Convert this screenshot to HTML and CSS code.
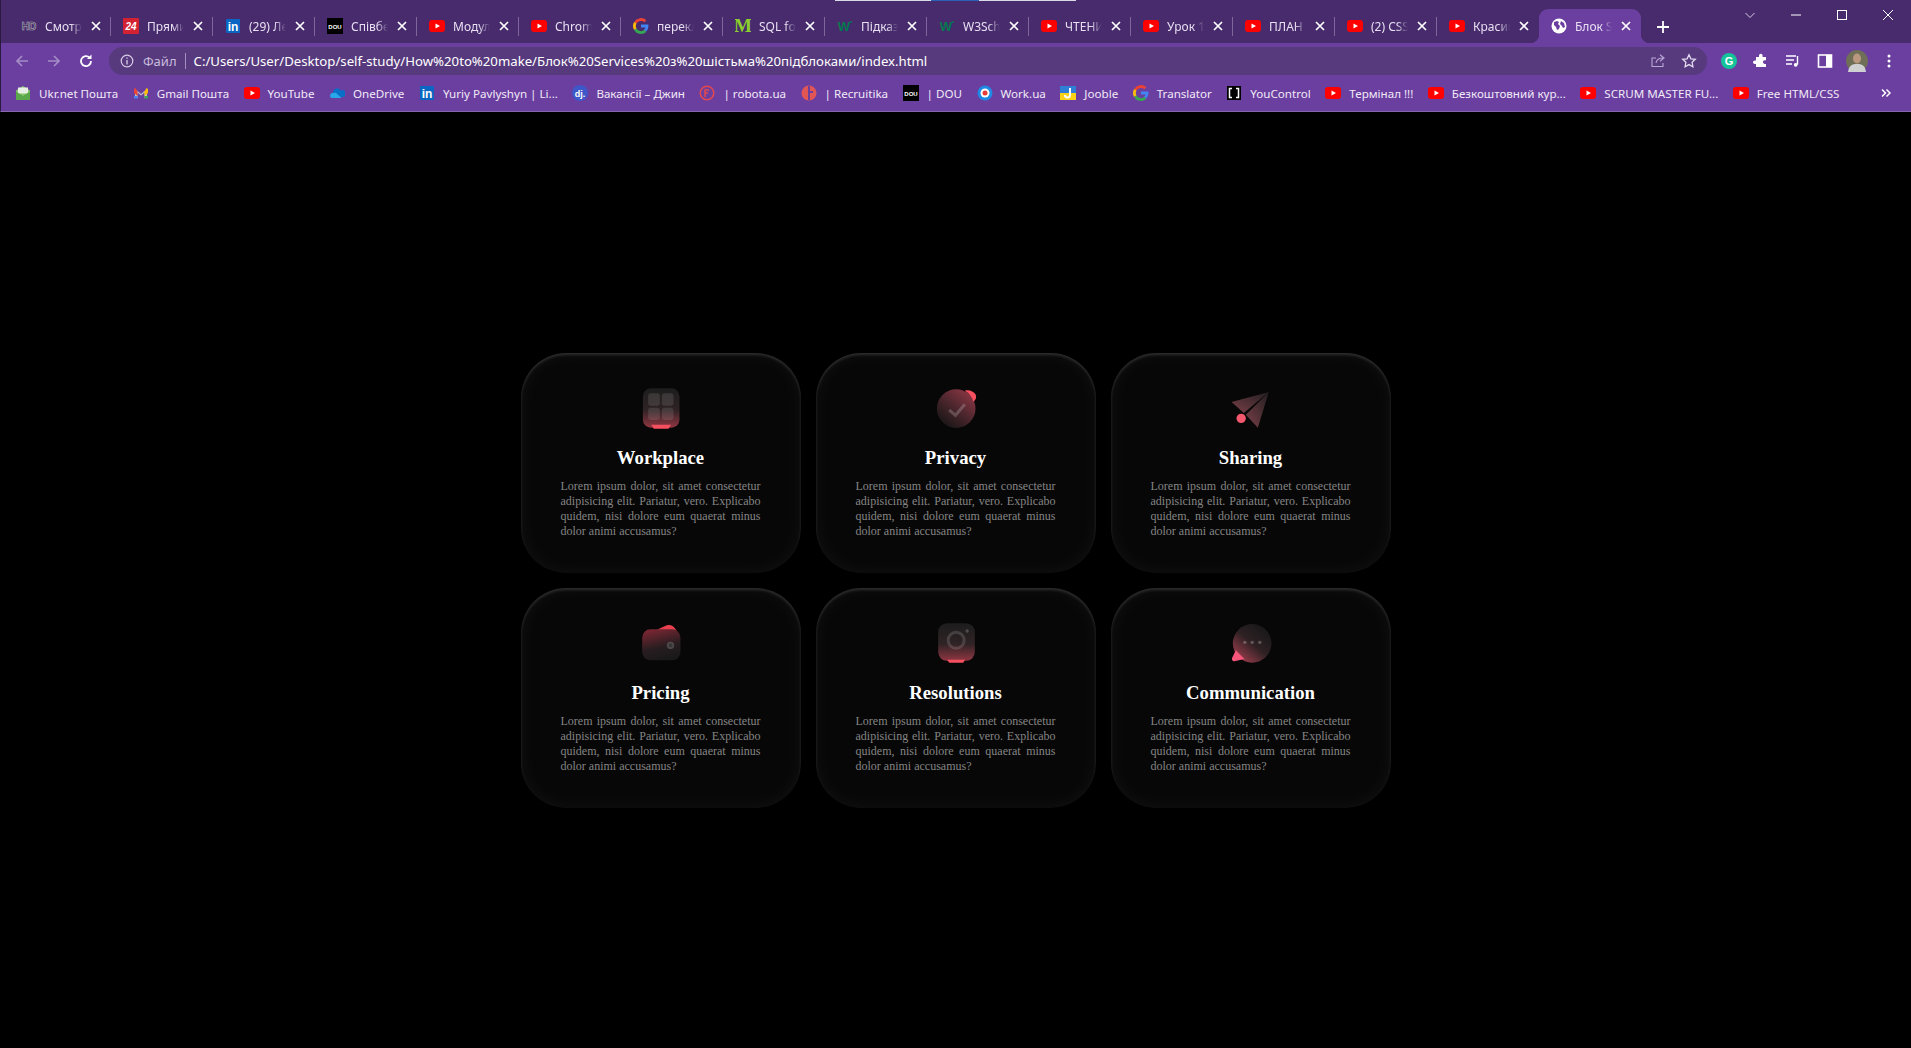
FILE: index.html
```html
<!DOCTYPE html>
<html lang="uk">
<head>
  <meta charset="UTF-8" />
  <meta name="viewport" content="width=device-width, initial-scale=1" />
  <title>Блок Services</title>
  <link rel="stylesheet" href="styles.css">
</head>
<body>
  <!-- favicons and small toolbar icons -->
  <svg class="sprites" aria-hidden="true">
    <defs>
      <linearGradient id="g-tile" x1="0" y1="0" x2="0" y2="1">
        <stop offset="0" stop-color="#1d1d1d"/><stop offset=".55" stop-color="#2f2325"/><stop offset="1" stop-color="#8f3642"/>
      </linearGradient>
      <linearGradient id="g-round" x1=".85" y1=".05" x2=".15" y2=".95">
        <stop offset="0" stop-color="#8c3745"/><stop offset=".55" stop-color="#45242a"/><stop offset="1" stop-color="#161515"/>
      </linearGradient>
      <linearGradient id="g-wallet" x1=".2" y1="0" x2=".5" y2="1">
        <stop offset="0" stop-color="#7c2733"/><stop offset=".6" stop-color="#281d20"/><stop offset="1" stop-color="#1a191a"/>
      </linearGradient>
      <linearGradient id="g-bubble" x1=".1" y1=".95" x2=".8" y2=".1">
        <stop offset="0" stop-color="#a5404f"/><stop offset=".55" stop-color="#2e2124"/><stop offset="1" stop-color="#191819"/>
      </linearGradient>
      <linearGradient id="g-plane" x1="1" y1="0" x2="0" y2="1">
        <stop offset="0" stop-color="#211e1f"/><stop offset="1" stop-color="#7a4049"/>
      </linearGradient>
    </defs>
    <symbol id="i-yt" viewBox="0 0 16 16"><rect y="2" width="16" height="12" rx="3" fill="#f00"/><path d="M6.5 5.5 11 8l-4.500 2.500z" fill="#fff"/></symbol>
    <symbol id="i-g" viewBox="0 0 16 16">
      <path d="M2.300 4.800A6.500 6.500 0 0 1 12.400 3.300" fill="none" stroke="#ea4335" stroke-width="2.800"/>
      <path d="M2.300 4.800a6.500 6.500 0 0 0 0 6.400" fill="none" stroke="#fbbc05" stroke-width="2.800"/>
      <path d="M2.300 11.200a6.500 6.500 0 0 0 10 1.700" fill="none" stroke="#34a853" stroke-width="2.800"/>
      <path d="M8 6.600h7.400c.3 3-.6 5.300-2.200 6.800l-2.200-1.800c.8-.6 1.300-1.300 1.500-2.200H8z" fill="#4285f4"/>
    </symbol>
    <symbol id="i-x" viewBox="0 0 10 10"><path d="M1 1l8 8M9 1l-8 8" stroke="#fff" stroke-width="1.700" fill="none"/></symbol>
  </svg>

  <header class="chrome">
    <div class="top-line"><span class="blue"></span></div>
    <div class="tabstrip">
      <div class="tab"><svg class="fav" viewBox="0 0 16 16"><text x="8" y="12" text-anchor="middle" class="ico-text" font-size="10" fill="#2b2140" stroke="#b9b0c6" stroke-width=".6">HD</text></svg><span class="tab-title">Смотреть</span><svg class="tab-x"><use href="#i-x"/></svg></div>
      <div class="tab"><svg class="fav" viewBox="0 0 16 16"><rect width="16" height="16" rx="1" fill="#d32232"/><text x="8" y="12" text-anchor="middle" class="ico-text" font-size="10" font-style="italic" fill="#fff">24</text></svg><span class="tab-title">Прямий</span><svg class="tab-x"><use href="#i-x"/></svg></div>
      <div class="tab"><svg class="fav" viewBox="0 0 16 16"><rect x="1" y="1" width="14" height="14" rx="1" fill="#0a66c2"/><text x="8" y="13" text-anchor="middle" class="ico-text" font-size="12" fill="#fff">in</text></svg><span class="tab-title">(29) Лента</span><svg class="tab-x"><use href="#i-x"/></svg></div>
      <div class="tab"><svg class="fav" viewBox="0 0 16 16"><rect width="16" height="16" fill="#000"/><text x="8" y="10.500" text-anchor="middle" class="ico-text" font-size="6" fill="#fff">DOU</text></svg><span class="tab-title">Співбесіда</span><svg class="tab-x"><use href="#i-x"/></svg></div>
      <div class="tab"><svg class="fav"><use href="#i-yt"/></svg><span class="tab-title">Модуль</span><svg class="tab-x"><use href="#i-x"/></svg></div>
      <div class="tab"><svg class="fav"><use href="#i-yt"/></svg><span class="tab-title">Chrome</span><svg class="tab-x"><use href="#i-x"/></svg></div>
      <div class="tab"><svg class="fav"><use href="#i-g"/></svg><span class="tab-title">переклад</span><svg class="tab-x"><use href="#i-x"/></svg></div>
      <div class="tab"><svg class="fav" viewBox="0 0 16 16"><text x="8" y="14" text-anchor="middle" class="ico-serif" font-size="19" fill="#8ccf2c">M</text></svg><span class="tab-title">SQL for</span><svg class="tab-x"><use href="#i-x"/></svg></div>
      <div class="tab"><svg class="fav" viewBox="0 0 16 16"><text x="7" y="13" text-anchor="middle" class="ico-text" font-size="13" fill="#04794f">W</text><circle cx="14" cy="4" r="1" fill="#04794f"/></svg><span class="tab-title">Підказки</span><svg class="tab-x"><use href="#i-x"/></svg></div>
      <div class="tab"><svg class="fav" viewBox="0 0 16 16"><text x="7" y="13" text-anchor="middle" class="ico-text" font-size="13" fill="#04794f">W</text><circle cx="14" cy="4" r="1" fill="#04794f"/></svg><span class="tab-title">W3Schools</span><svg class="tab-x"><use href="#i-x"/></svg></div>
      <div class="tab"><svg class="fav"><use href="#i-yt"/></svg><span class="tab-title">ЧТЕНИЕ</span><svg class="tab-x"><use href="#i-x"/></svg></div>
      <div class="tab"><svg class="fav"><use href="#i-yt"/></svg><span class="tab-title">Урок 1:</span><svg class="tab-x"><use href="#i-x"/></svg></div>
      <div class="tab"><svg class="fav"><use href="#i-yt"/></svg><span class="tab-title">ПЛАН Б</span><svg class="tab-x"><use href="#i-x"/></svg></div>
      <div class="tab"><svg class="fav"><use href="#i-yt"/></svg><span class="tab-title">(2) CSS</span><svg class="tab-x"><use href="#i-x"/></svg></div>
      <div class="tab"><svg class="fav"><use href="#i-yt"/></svg><span class="tab-title">Красивый</span><svg class="tab-x"><use href="#i-x"/></svg></div>
      <div class="tab active"><svg class="fav" viewBox="0 0 16 16"><circle cx="8" cy="8" r="7.500" fill="#fff"/><path d="M3 4l3-1 2 1-1 2 2 2-1 3-2 1-1-3-2-2zM10 3l3 2 1 4-2 1-1-2-2-2z" fill="#6b3fa0"/></svg><span class="tab-title">Блок Services</span><svg class="tab-x"><use href="#i-x"/></svg></div>
      <button class="new-tab" type="button"><svg viewBox="0 0 14 14"><path d="M7 1v12M1 7h12" stroke="#fff" stroke-width="1.800"/></svg></button>
      <div class="win-controls">
        <span class="win-btn"><svg viewBox="0 0 12 12"><path d="M1.500 4 6 8.500 10.500 4" fill="none" stroke="#d8cde6" stroke-width="1"/></svg></span>
        <span class="win-btn"><svg viewBox="0 0 12 12"><path d="M1 6h10" stroke="#fff" stroke-width="1"/></svg></span>
        <span class="win-btn"><svg viewBox="0 0 12 12"><rect x="1.500" y="1.500" width="9" height="9" fill="none" stroke="#fff" stroke-width="1"/></svg></span>
        <span class="win-btn"><svg viewBox="0 0 12 12"><path d="M1 1l10 10M11 1 1 11" stroke="#fff" stroke-width="1"/></svg></span>
      </div>
    </div>

    <div class="toolbar">
      <span class="tb-btn"><svg viewBox="0 0 16 16"><path d="M14 8H3M8 3 3 8l5 5" fill="none" stroke="#a58cc6" stroke-width="1.700"/></svg></span>
      <span class="tb-btn"><svg viewBox="0 0 16 16"><path d="M2 8h11M8 3l5 5-5 5" fill="none" stroke="#a58cc6" stroke-width="1.700"/></svg></span>
      <span class="tb-btn"><svg viewBox="0 0 16 16"><path d="M13 8a5 5 0 1 1-1.500-3.500" fill="none" stroke="#fff" stroke-width="1.800"/><path d="M13.500 1.500v4.500H9z" fill="#fff"/></svg></span>
      <div class="omnibox">
        <svg class="omni-info" viewBox="0 0 14 14"><circle cx="7" cy="7" r="5.800" fill="none" stroke="#d8cde6" stroke-width="1.200"/><path d="M7 6v4.500M7 3.500v1.300" stroke="#d8cde6" stroke-width="1.300"/></svg>
        <span class="omni-scheme">Файл</span>
        <span class="omni-sep"></span>
        <span class="omni-url">C:/Users/User/Desktop/self-study/How%20to%20make/Блок%20Services%20з%20шістьма%20підблоками/index.html</span>
        <svg class="omni-ico" viewBox="0 0 16 16"><path d="M13 10v3.500H2V5h4M6 10c.5-3 2.500-5 7-5M10 1.800 14 5l-4 3.200" fill="none" stroke="#b9a7d3" stroke-width="1.100"/></svg>
        <svg class="omni-ico" viewBox="0 0 16 16"><path d="m8 1.800 1.900 4 4.400.5-3.200 3 .8 4.400L8 11.600l-3.900 2.100.8-4.400-3.200-3 4.400-.5z" fill="none" stroke="#e4dbef" stroke-width="1.300"/></svg>
      </div>
      <span class="tb-btn"><svg viewBox="0 0 16 16"><circle cx="8" cy="8" r="8" fill="#15c39a"/><text x="8" y="12" text-anchor="middle" class="ico-text" font-size="11" fill="#fff">G</text></svg></span>
      <span class="tb-btn"><svg viewBox="0 0 16 16"><path d="M6 2.500a1.800 1.800 0 0 1 3.600 0V4H13v3.300h-1.300a1.800 1.800 0 0 0 0 3.600H13V14H3v-3H1.800a1.800 1.800 0 0 1 0-3.600H3V4h3z" fill="#fff"/></svg></span>
      <span class="tb-btn"><svg viewBox="0 0 16 16"><path d="M1 3h10M1 7h8M1 11h6" stroke="#fff" stroke-width="1.300"/><path d="M12.500 3v8.500" stroke="#fff" stroke-width="1.400"/><circle cx="10.700" cy="11.800" r="1.900" fill="#fff"/></svg></span>
      <span class="tb-btn"><svg viewBox="0 0 16 16"><rect x="1.500" y="2" width="13" height="12" fill="none" stroke="#fff" stroke-width="1.600"/><rect x="9" y="2" width="5.500" height="12" fill="#fff"/></svg></span>
      <span class="tb-btn"><svg class="avatar" viewBox="0 0 22 22"><circle cx="11" cy="11" r="11" fill="#6f6f58"/><ellipse cx="11" cy="8.500" rx="4" ry="5" fill="#b9987f"/><path d="M2 22c1-7 4-8 9-8s8 1 9 8z" fill="#cfd0d2"/></svg></span>
      <span class="tb-btn"><svg viewBox="0 0 16 16"><circle cx="8" cy="3" r="1.500" fill="#fff"/><circle cx="8" cy="8" r="1.500" fill="#fff"/><circle cx="8" cy="13" r="1.500" fill="#fff"/></svg></span>
    </div>

    <nav class="bookmarks">
      <a class="bm"><svg class="bm-ico" viewBox="0 0 16 16"><path d="M1 5.500 8 1l7 4.500V15H1z" fill="#84c66a"/><path d="M3 2.500h10v6H3z" fill="#e8efe4"/><path d="M1 6.500 8 11l7-4.500V15H1z" fill="#5aa84a"/></svg>Ukr.net Пошта</a>
      <a class="bm"><svg class="bm-ico" viewBox="0 0 16 16"><path d="M2 13V4l6 5 6-5v9h-2.500V7.500L8 10.500 4.500 7.500V13z" fill="#c5c5c5"/><path d="M1 4v4l3.500 3V6.500L2.500 3z" fill="#ea4335"/><path d="M15 4v4l-3.500 3V6.500l2-3.500z" fill="#fbbc05"/><path d="M1 11v2.500h3.500V11z" fill="#4285f4"/><path d="M11.500 11v2.500H15V11z" fill="#34a853"/></svg>Gmail Пошта</a>
      <a class="bm"><svg class="bm-ico"><use href="#i-yt"/></svg>YouTube</a>
      <a class="bm"><svg class="bm-ico" viewBox="0 0 16 16"><path d="M4 7a4 4 0 0 1 7.500-1.500A3.500 3.500 0 0 1 15 12H6z" fill="#0a6fc8"/><path d="M1 11a3 3 0 0 1 4-3l1.500-.5 6 5.500H3a2 2 0 0 1-2-2z" fill="#28a8ea"/></svg>OneDrive</a>
      <a class="bm"><svg class="bm-ico" viewBox="0 0 16 16"><rect x="1" y="1" width="14" height="14" rx="1" fill="#0a66c2"/><text x="8" y="13" text-anchor="middle" class="ico-text" font-size="12" fill="#fff">in</text></svg>Yuriy Pavlyshyn | Li...</a>
      <a class="bm"><svg class="bm-ico" viewBox="0 0 16 16"><circle cx="8" cy="8" r="8" fill="#3e57c9"/><text x="8" y="11.500" text-anchor="middle" class="ico-text" font-size="9" fill="#fff">dj.</text></svg>Вакансії – Джин</a>
      <a class="bm"><svg class="bm-ico" viewBox="0 0 16 16"><circle cx="8" cy="8" r="6.800" fill="none" stroke="#e5484d" stroke-width="1.500"/><path d="M6 12V5h4M6 8h3" fill="none" stroke="#e5484d" stroke-width="1.500"/></svg>| robota.ua</a>
      <a class="bm"><svg class="bm-ico" viewBox="0 0 16 16"><circle cx="8" cy="8" r="7.500" fill="#e25555"/><path d="M7 1h2v5h3v2H9v7H7z" fill="#6b3fa0"/></svg>| Recruitika</a>
      <a class="bm"><svg class="bm-ico" viewBox="0 0 16 16"><rect width="16" height="16" fill="#000"/><text x="8" y="10.500" text-anchor="middle" class="ico-text" font-size="6" fill="#fff">DOU</text></svg>| DOU</a>
      <a class="bm"><svg class="bm-ico" viewBox="0 0 16 16"><circle cx="8" cy="8" r="7.500" fill="#1e88e5"/><circle cx="8" cy="8" r="4.500" fill="#fff"/><circle cx="8" cy="8" r="2.500" fill="#e53935"/></svg>Work.ua</a>
      <a class="bm"><svg class="bm-ico" viewBox="0 0 16 16"><rect y="1" width="16" height="7" fill="#2f7fd6"/><rect y="8" width="16" height="7" fill="#fcd116"/><path d="M10 3v7a2.500 2.500 0 0 1-5 0" fill="none" stroke="#fff" stroke-width="2"/></svg>Jooble</a>
      <a class="bm"><svg class="bm-ico"><use href="#i-g"/></svg>Translator</a>
      <a class="bm"><svg class="bm-ico" viewBox="0 0 16 16"><rect x="1" y="1" width="14" height="14" fill="#000"/><path d="M6 3.500H3.500v9H6M10 3.500h2.500v9H10" fill="none" stroke="#fff" stroke-width="1.500"/></svg>YouControl</a>
      <a class="bm"><svg class="bm-ico"><use href="#i-yt"/></svg>Термінал !!!</a>
      <a class="bm"><svg class="bm-ico"><use href="#i-yt"/></svg>Безкоштовний кур...</a>
      <a class="bm"><svg class="bm-ico"><use href="#i-yt"/></svg>SCRUM MASTER FU...</a>
      <a class="bm"><svg class="bm-ico"><use href="#i-yt"/></svg>Free HTML/CSS</a>
      <svg class="bm-more" viewBox="0 0 10 10"><path d="M1 1.500 4.500 5 1 8.500M5.500 1.500 9 5 5.500 8.500" fill="none" stroke="#fff" stroke-width="1.500"/></svg>
    </nav>
  </header>

  <main class="stage">
    <section class="services">
      <article class="card">
        <svg class="card-icon" viewBox="61.500 21 180 150">
          <rect x="97" y="37" width="110" height="118" rx="24" fill="url(#g-tile)"/>
          <g fill="#fff" fill-opacity=".11">
            <rect x="113" y="52" width="35" height="37" rx="8"/><rect x="154" y="52" width="35" height="37" rx="8"/>
            <rect x="113" y="95" width="35" height="37" rx="8"/><rect x="154" y="95" width="35" height="37" rx="8"/>
          </g>
          <path d="M122 146h60l-8 12h-44z" fill="#f4505f"/>
        </svg>
        <h3>Workplace</h3>
        <p>Lorem ipsum dolor, sit amet consectetur adipisicing elit. Pariatur, vero. Explicabo quidem, nisi dolore eum quaerat minus dolor animi accusamus?</p>
      </article>
      <article class="card">
        <svg class="card-icon" viewBox="46.500 21 180 150">
          <circle cx="137" cy="98" r="58" fill="url(#g-round)"/>
          <path d="M163 44a58 58 0 0 1 26 33c8-5 10-14 6-22-5-9-20-15-32-11z" fill="#f4505f"/>
          <path d="M116 102l19 16 28-33" fill="none" stroke="#fff" stroke-opacity=".2" stroke-width="9"/>
        </svg>
        <h3>Privacy</h3>
        <p>Lorem ipsum dolor, sit amet consectetur adipisicing elit. Pariatur, vero. Explicabo quidem, nisi dolore eum quaerat minus dolor animi accusamus?</p>
      </article>
      <article class="card">
        <svg class="card-icon" viewBox="61.500 21 180 150">
          <path d="M205 48 93 78l37 33z" fill="url(#g-plane)"/>
          <path d="M205 48 136 116l36 39z" fill="url(#g-plane)"/>
          <circle cx="122" cy="127" r="14" fill="#f5586c"/>
        </svg>
        <h3>Sharing</h3>
        <p>Lorem ipsum dolor, sit amet consectetur adipisicing elit. Pariatur, vero. Explicabo quidem, nisi dolore eum quaerat minus dolor animi accusamus?</p>
      </article>
      <article class="card">
        <svg class="card-icon" viewBox="61.500 21 180 150">
          <path d="M122 66c18-8 30-17 47-23 13-4 24 4 30 18z" fill="#e8404f"/>
          <rect x="95" y="55" width="115" height="93" rx="25" fill="url(#g-wallet)"/>
          <circle cx="180" cy="103" r="11" fill="#4f4a4b"/><circle cx="180" cy="103" r="6" fill="#3a3637"/>
        </svg>
        <h3>Pricing</h3>
        <p>Lorem ipsum dolor, sit amet consectetur adipisicing elit. Pariatur, vero. Explicabo quidem, nisi dolore eum quaerat minus dolor animi accusamus?</p>
      </article>
      <article class="card">
        <svg class="card-icon" viewBox="46.500 21 180 150">
          <rect x="83" y="37" width="110" height="112" rx="26" fill="url(#g-tile)"/>
          <circle cx="137" cy="88" r="24" fill="none" stroke="#fff" stroke-opacity=".14" stroke-width="9"/>
          <circle cx="170" cy="60" r="5" fill="#fff" fill-opacity=".2"/>
          <path d="M110 146h54l-6 9h-42z" fill="#f4505f"/>
        </svg>
        <h3>Resolutions</h3>
        <p>Lorem ipsum dolor, sit amet consectetur adipisicing elit. Pariatur, vero. Explicabo quidem, nisi dolore eum quaerat minus dolor animi accusamus?</p>
      </article>
      <article class="card">
        <svg class="card-icon" viewBox="61.500 21 180 150">
          <circle cx="155" cy="97" r="58" fill="url(#g-bubble)"/>
          <path d="M106 118 95 140c-3 8 3 12 10 10l27-6z" fill="#f5567a"/>
          <g fill="#fff" fill-opacity=".25"><circle cx="133" cy="94" r="5"/><circle cx="155" cy="94" r="5"/><circle cx="178" cy="94" r="5"/></g>
        </svg>
        <h3>Communication</h3>
        <p>Lorem ipsum dolor, sit amet consectetur adipisicing elit. Pariatur, vero. Explicabo quidem, nisi dolore eum quaerat minus dolor animi accusamus?</p>
      </article>
    </section>
  </main>
</body>
</html>
```

FILE: styles.css
```css
* {
  box-sizing: border-box;
}
html, body {
  height: 100%;
}
body {
  margin: 0;
  background: #000;
  display: flex;
  flex-direction: column;
  overflow: hidden;
}
.sprites {
  position: absolute;
  width: 0;
  height: 0;
}
.ico-text {
  font-family: "Liberation Sans", sans-serif;
  font-weight: 700;
}
.ico-serif {
  font-family: "Liberation Serif", serif;
  font-weight: 700;
}

/* browser chrome */
.chrome {
  position: relative;
  height: 112px;
  flex: none;
  font-family: "Noto Sans", "Liberation Sans", sans-serif;
  font-size: 12px;
  color: #fff;
  border-left: 1px solid #2a1a40;
  border-bottom: 1px solid #8466ab;
  background: #6b3fa0;
}
.top-line {
  position: absolute;
  top: 0;
  left: 834px;
  width: 241px;
  height: 1px;
  background: #d9d9e8;
}
.top-line .blue {
  display: block;
  margin-left: 96px;
  width: 48px;
  height: 1px;
  background: #2b62b8;
}
.tabstrip {
  height: 43px;
  padding-left: 8px;
  display: flex;
  align-items: flex-end;
  background: #472b6c;
}
.tab {
  position: relative;
  width: 102px;
  height: 34px;
  padding: 0 10px 0 12px;
  display: flex;
  align-items: center;
  flex: none;
}
.tab::after {
  content: "";
  position: absolute;
  right: 0;
  top: 8px;
  width: 1px;
  height: 19px;
  background: #7d679b;
}
.tab:has(+ .active)::after {
  display: none;
}
.tab.active {
  background: #6b3fa0;
  border-radius: 9px 9px 0 0;
}
.tab.active::before,
.tab.active::after {
  content: "";
  position: absolute;
  top: auto;
  bottom: 0;
  width: 9px;
  height: 9px;
}
.tab.active::before {
  left: -9px;
  background: radial-gradient(circle at 0 0, transparent 9px, #6b3fa0 9.5px);
}
.tab.active::after {
  right: -9px;
  background: radial-gradient(circle at 100% 0, transparent 9px, #6b3fa0 9.5px);
}
.fav {
  width: 16px;
  height: 16px;
  flex: none;
}
.tab-title {
  margin-left: 8px;
  flex: 1;
  min-width: 0;
  white-space: nowrap;
  overflow: hidden;
  color: #e8e0f2;
  -webkit-mask-image: linear-gradient(90deg, #000 70%, transparent 100%);
  mask-image: linear-gradient(90deg, #000 70%, transparent 100%);
}
.tab-x {
  margin-left: 9px;
  width: 10px;
  height: 10px;
  flex: none;
}
.new-tab {
  margin: 0 0 2px 8px;
  width: 28px;
  height: 28px;
  padding: 7px;
  border: none;
  background: none;
  flex: none;
}
.new-tab svg {
  display: block;
}
.win-controls {
  margin-left: auto;
  align-self: flex-start;
  display: flex;
}
.win-btn {
  width: 46px;
  height: 30px;
  display: flex;
  align-items: center;
  justify-content: center;
}
.win-btn svg {
  width: 12px;
  height: 12px;
}

.toolbar {
  height: 36px;
  padding: 0 6px 0 5px;
  display: flex;
  align-items: center;
}
.tb-btn {
  width: 32px;
  height: 28px;
  flex: none;
  display: flex;
  align-items: center;
  justify-content: center;
}
.tb-btn svg {
  width: 16px;
  height: 16px;
}
.tb-btn svg.avatar {
  width: 22px;
  height: 22px;
}
.omnibox {
  margin: 0 6px 0 7px;
  height: 28px;
  flex: 1;
  padding: 0 10px 0 11px;
  display: flex;
  align-items: center;
  border-radius: 14px;
  background: #573a7e;
}
.omni-info {
  width: 14px;
  height: 14px;
  flex: none;
}
.omni-scheme {
  margin-left: 9px;
  font-size: 13px;
  color: #c9bbdc;
}
.omni-sep {
  margin: 0 8px;
  width: 1px;
  height: 16px;
  background: #a390bf;
}
.omni-url {
  flex: 1;
  font-size: 13.200px;
  color: #fff;
  white-space: nowrap;
}
.omni-ico {
  margin-left: 15px;
  width: 16px;
  height: 16px;
  flex: none;
}

.bookmarks {
  height: 32px;
  padding: 0 0 4px 14px;
  display: flex;
  align-items: center;
  gap: 14.500px;
  font-size: 11.600px;
  color: #f0eaf7;
}
.bm {
  flex: none;
  display: flex;
  align-items: center;
  white-space: nowrap;
}
.bm-ico {
  margin-right: 8px;
  width: 16px;
  height: 16px;
  flex: none;
}
.bm-more {
  margin-left: auto;
  margin-right: 20px;
  width: 10px;
  height: 10px;
}

/* services grid */
.stage {
  flex: 1;
  display: flex;
  align-items: center;
  justify-content: center;
}
.services {
  display: grid;
  grid-template-columns: repeat(3, 280px);
  gap: 15px;
}
.card {
  height: 220px;
  padding: 32px 40px 0;
  text-align: center;
  font-family: "Liberation Serif", "Times New Roman", serif;
  border-radius: 45px;
  background: #070707;
  box-shadow: inset 0 2px 3px rgba(255, 255, 255, 0.14), inset 0 0 20px rgba(255, 255, 255, 0.05);
}
.card-icon {
  display: block;
  margin: -2px auto 0;
  width: 60px;
  height: 50px;
  filter: blur(0.5px);
}
.card h3 {
  margin: 14px 0 0;
  font-size: 18.720px;
  line-height: 22px;
  color: #fff;
}
.card p {
  margin: 10px 0 0;
  font-size: 12px;
  line-height: 15px;
  text-align: justify;
  color: #858585;
}
```
